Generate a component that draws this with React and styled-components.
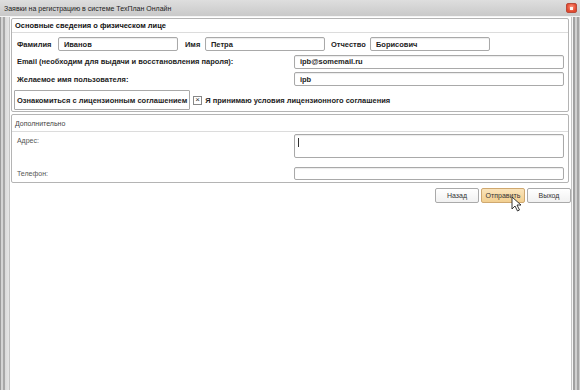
import React from 'react';
import styled, { createGlobalStyle } from 'styled-components';

const GlobalStyle = createGlobalStyle`
  html, body { margin: 0; padding: 0; background: #fff; }
  body { font-family: "Liberation Sans", Arial, sans-serif; font-size: 7.5px; color: #111; }
  * { box-sizing: border-box; }
`;

const Window = styled.div`
  width: 580px;
  height: 390px;
  display: flex;
  flex-direction: column;
  background: #c8c8c8;
  position: relative;
  overflow: hidden;
`;

const TitleBar = styled.div`
  height: 17px;
  display: flex;
  align-items: center;
  justify-content: space-between;
  padding: 0 3px 0 4px;
  background: linear-gradient(#dedede, #c9c9c9);
  border-bottom: 1px solid #f4f4f4;
`;

const Title = styled.span`
  font-size: 7px;
  color: #222;
`;

const CloseBtn = styled.div`
  width: 11px;
  height: 10px;
  border-radius: 2px;
  background: radial-gradient(circle at 50% 40%, #ff9a84, #e2482e 70%);
  border: 1px solid #b94a3a;
  display: flex;
  align-items: center;
  justify-content: center;
  &::after {
    content: '';
    width: 3px;
    height: 3px;
    background: #fff3ef;
  }
`;

const Body = styled.div`
  flex: 1;
  display: flex;
`;

const SideFrame = styled.div`
  width: ${(p) => p.$w}px;
  background: ${(p) => p.$bg};
`;

const Content = styled.div`
  flex: 1;
  background: #fff;
  border-left: 1px solid #c4c4c4;
  border-right: 1px solid #c4c4c4;
  padding: 1px 0 0 1px;
  display: flex;
  flex-direction: column;
  gap: 2px;
`;

const Panel = styled.div`
  width: 558px;
  border: 1px solid #b4b4b4;
  border-radius: 2px;
  display: flex;
  flex-direction: column;
  padding-bottom: ${(p) => p.$pb || 0}px;
`;

const PanelHeader = styled.div`
  height: ${(p) => p.$h || 14}px;
  display: flex;
  align-items: center;
  padding-left: 3px;
  border-bottom: 1px solid #dcdcdc;
  font-weight: ${(p) => (p.$bold ? 700 : 400)};
  color: ${(p) => (p.$bold ? '#111' : '#444')};
  font-size: ${(p) => (p.$bold ? '7.5px' : '7px')};
`;

const Row = styled.div`
  display: flex;
  align-items: ${(p) => p.$align || 'center'};
  margin-top: ${(p) => p.$mt || 0}px;
  padding-left: ${(p) => p.$pl || 5}px;
  height: ${(p) => p.$h}px;
`;

const Label = styled.span`
  font-weight: ${(p) => (p.$light ? 400 : 700)};
  color: ${(p) => (p.$light ? '#555' : '#222')};
  font-size: ${(p) => (p.$light ? '7px' : '7.5px')};
  width: ${(p) => (p.$w ? `${p.$w}px` : 'auto')};
  margin-left: ${(p) => p.$ml || 0}px;
  margin-top: ${(p) => p.$mt || 0}px;
  flex-shrink: 0;
`;

const Field = styled.div`
  width: ${(p) => p.$w}px;
  height: ${(p) => p.$h || 14}px;
  border: 1px solid #a9a9a9;
  border-radius: 2px;
  box-shadow: inset 0 1px 1px rgba(0, 0, 0, 0.08);
  background: #fff;
  display: flex;
  align-items: ${(p) => (p.$top ? 'flex-start' : 'center')};
  padding: ${(p) => (p.$top ? '3px 3px' : '0 5px')};
  font-weight: 700;
  font-size: 7.5px;
  color: #222;
  flex-shrink: 0;
  margin-left: ${(p) => (p.$auto ? 'auto' : '0')};
  margin-right: ${(p) => p.$mr || 0}px;
`;

const Caret = styled.div`
  width: 1px;
  height: 9px;
  background: #333;
`;

const LicenseButton = styled.div`
  height: 20px;
  padding: 0 2px;
  display: flex;
  align-items: center;
  border: 1px solid #a9a9a9;
  border-radius: 1px;
  font-weight: 700;
  color: #222;
  font-size: 7.5px;
`;

const CheckBox = styled.div`
  width: 9px;
  height: 9px;
  border: 1px solid #888;
  margin: 0 3px 0 3px;
  display: flex;
  align-items: center;
  justify-content: center;
  font-size: 8px;
  line-height: 1;
  color: #333;
`;

const Buttons = styled.div`
  display: flex;
  justify-content: flex-end;
  gap: 2px;
  margin-top: 3px;
  width: 560px;
`;

const Button = styled.div`
  width: 44px;
  height: 15px;
  display: flex;
  align-items: center;
  justify-content: center;
  border: 1px solid ${(p) => (p.$active ? '#cfa870' : '#aaa')};
  border-radius: 2px;
  background: ${(p) => (p.$active ? 'linear-gradient(#fae4bb, #f2cf90)' : 'linear-gradient(#ffffff, #f1f1f1)')};
  font-size: 7px;
  color: #333;
`;

const Cursor = styled.svg`
  position: absolute;
  left: 511px;
  top: 196px;
`;

export default function App() {
  return (
    <>
      <GlobalStyle />
      <Window>
        <TitleBar>
          <Title>Заявки на регистрацию в системе ТехПлан Онлайн</Title>
          <CloseBtn />
        </TitleBar>
        <Body>
          <SideFrame $w={10} $bg="linear-gradient(90deg, #9c9c9c 0, #9c9c9c 1px, #d4d4d4 1px, #d4d4d4 3px, #a8a8a8 3px, #a8a8a8 5px, #dadada 5px, #e6e6e6 9px, #f6f6f6 9px)" />
          <Content>
            <Panel $pb={1}>
              <PanelHeader $bold>Основные сведения о физическом лице</PanelHeader>
              <Row $mt={4} $h={14}>
                <Label $w={41}>Фамилия</Label>
                <Field $w={120}>Иванов</Field>
                <Label $ml={7} $w={20}>Имя</Label>
                <Field $w={120}>Петра</Field>
                <Label $ml={6} $w={39}>Отчество</Label>
                <Field $w={120}>Борисович</Field>
              </Row>
              <Row $mt={3} $h={15}>
                <Label>Email (необходим для выдачи и восстановления пароля):</Label>
                <Field $w={270} $auto $mr={4}>ipb@somemail.ru</Field>
              </Row>
              <Row $mt={3} $h={14}>
                <Label>Желаемое имя пользователя:</Label>
                <Field $w={270} $auto $mr={4}>ipb</Field>
              </Row>
              <Row $mt={4} $h={20} $pl={2}>
                <LicenseButton>Ознакомиться с лицензионным соглашением</LicenseButton>
                <CheckBox>×</CheckBox>
                <Label>Я принимаю условия лицензионного соглашения</Label>
              </Row>
            </Panel>
            <Panel $pb={2}>
              <PanelHeader $h={17}>Дополнительно</PanelHeader>
              <Row $mt={2} $h={24} $align="flex-start">
                <Label $light $mt={3}>Адрес:</Label>
                <Field $w={270} $h={24} $auto $mr={4} $top><Caret /></Field>
              </Row>
              <Row $mt={9} $h={13}>
                <Label $light>Телефон:</Label>
                <Field $w={270} $h={13} $auto $mr={4} />
              </Row>
            </Panel>
            <Buttons>
              <Button>Назад</Button>
              <Button $active>Отправить</Button>
              <Button>Выход</Button>
            </Buttons>
          </Content>
          <SideFrame $w={9} $bg="linear-gradient(90deg, #f6f6f6 0, #f6f6f6 1px, #a0a0a0 1px, #a0a0a0 3px, #d0d0d0 3px, #d0d0d0 5px, #a4a4a4 5px, #a4a4a4 7px, #cccccc 7px)" />
        </Body>
        <Cursor width="11" height="16" viewBox="0 0 11 16">
          <path d="M1 1 L1 13 L4 10 L6.5 15 L8.5 14 L6 9 L10 9 Z" fill="#fff" stroke="#222" strokeWidth="0.9" strokeLinejoin="round" />
        </Cursor>
      </Window>
    </>
  );
}
